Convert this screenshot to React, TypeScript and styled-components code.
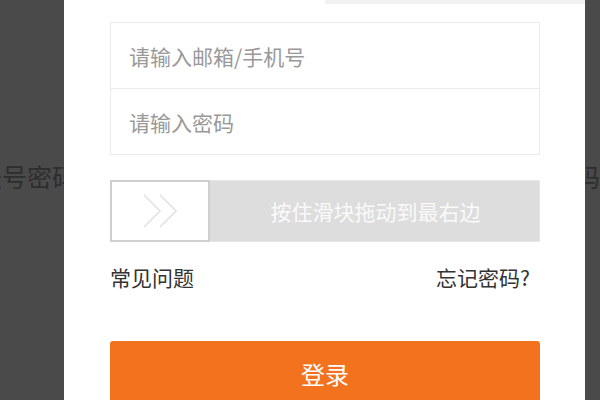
import React from 'react';
import styled, { createGlobalStyle } from 'styled-components';

const GlobalStyle = createGlobalStyle`
  html, body {
    margin: 0;
    padding: 0;
    background: #ffffff;
  }
  body {
    font-family: "Noto Sans CJK SC", "Noto Sans", sans-serif;
  }
`;

const Screen = styled.div`
  position: relative;
  width: 600px;
  height: 400px;
  overflow: hidden;
  background: #ffffff;
`;

// the page that sits under the dark overlay
const BackPage = styled.div`
  display: flex;
  padding-top: 160px;
  font-size: 25px;
  line-height: 32px;
  color: #a0a0a0;
  white-space: nowrap;
`;

const BackTab = styled.span<{ $width?: number; $offset?: number }>`
  flex: 0 0 ${(p) => (p.$width ? `${p.$width}px` : 'auto')};
  margin-left: ${(p) => p.$offset ?? 0}px;
`;

const Overlay = styled.div`
  position: absolute;
  inset: 0;
  background: rgba(0, 0, 0, 0.71);
  display: flex;
  align-items: flex-start;
`;

const Modal = styled.div`
  margin-left: 64px;
  width: 521px;
  height: 420px;
  background: #ffffff;
  display: flex;
  flex-direction: column;
`;

const Tabs = styled.div`
  display: flex;
  height: 4px;
`;

const Tab = styled.div<{ $active?: boolean }>`
  flex: 1;
  background: ${(p) => (p.$active ? '#ffffff' : '#f1f2f2')};
`;

const Body = styled.div`
  padding: 18px 45px 0 46px;
  display: flex;
  flex-direction: column;
`;

const FieldGroup = styled.div`
  border: 1px solid #ebebeb;
  display: flex;
  flex-direction: column;
`;

const Field = styled.input`
  height: 65px;
  border: none;
  outline: none;
  padding: 0 0 0 18px;
  margin: 0;
  font-family: inherit;
  font-size: 21px;
  color: #333;
  background: transparent;
  &::placeholder {
    color: #999;
  }
  & + & {
    border-top: 1px solid #ebebeb;
  }
`;

const Slider = styled.div`
  margin-top: 25px;
  height: 62px;
  box-sizing: border-box;
  border: 1px solid #e6e6e6;
  background: #dddddd;
  display: flex;
  align-items: stretch;
`;

const Handle = styled.div`
  width: 100px;
  margin: -1px 0 -1px -1px;
  box-sizing: border-box;
  border: 2px solid #cfcfcf;
  background: #ffffff;
  display: flex;
  align-items: center;
  justify-content: center;
`;

const SliderText = styled.div`
  flex: 1;
  display: flex;
  align-items: center;
  justify-content: center;
  padding-left: 2px;
  font-size: 21px;
  color: #fafafa;
`;

const Links = styled.div`
  margin-top: 20px;
  display: flex;
  justify-content: space-between;
  padding-right: 10px;
  font-size: 21px;
  line-height: 30px;
  color: #333333;
`;

const LinkText = styled.span`
  cursor: pointer;
`;

const LoginButton = styled.button`
  margin-top: 49px;
  height: 64px;
  border: none;
  border-radius: 3px;
  background: #f3721e;
  color: #ffffff;
  font-family: inherit;
  font-size: 24px;
  cursor: pointer;
`;

const Chevrons = () => (
  <svg width="34" height="34" viewBox="0 0 34 34" fill="none" stroke="#e2e2e2" strokeWidth="1.6">
    <polyline points="1,1 17,17 1,33" />
    <polyline points="17,1 33,17 17,33" />
  </svg>
);

const App: React.FC = () => {
  return (
    <>
      <GlobalStyle />
      <Screen>
        <BackPage>
          <BackTab $width={548} $offset={-23}>账号密码登录</BackTab>
          <BackTab>验证码登录</BackTab>
        </BackPage>
        <Overlay>
          <Modal>
            <Tabs>
              <Tab $active />
              <Tab />
            </Tabs>
            <Body>
              <FieldGroup>
                <Field type="text" placeholder="请输入邮箱/手机号" />
                <Field type="password" placeholder="请输入密码" />
              </FieldGroup>
              <Slider>
                <Handle>
                  <Chevrons />
                </Handle>
                <SliderText>按住滑块拖动到最右边</SliderText>
              </Slider>
              <Links>
                <LinkText>常见问题</LinkText>
                <LinkText>忘记密码?</LinkText>
              </Links>
              <LoginButton>登录</LoginButton>
            </Body>
          </Modal>
        </Overlay>
      </Screen>
    </>
  );
};

export default App;
